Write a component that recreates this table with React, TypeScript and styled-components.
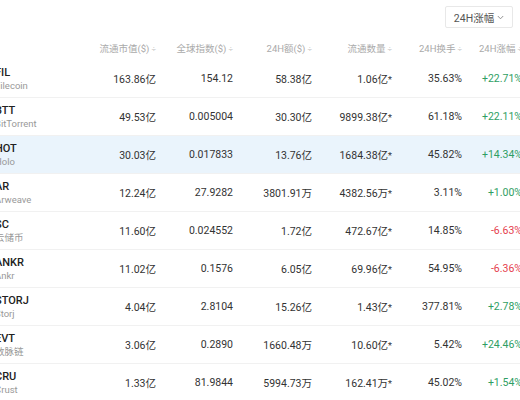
import React from "react";
import styled, { createGlobalStyle } from "styled-components";

const Global = createGlobalStyle`
  html, body { margin: 0; padding: 0; background: #fff; }
  body { font-family: Roboto, "Noto Sans CJK SC", sans-serif; color: #333; }
`;

const Page = styled.div`
  width: 520px;
  height: 400px;
  overflow: hidden;
  background: #fff;
`;

const Toolbar = styled.div`
  height: 35px;
  display: flex;
  align-items: flex-start;
  justify-content: flex-end;
  padding: 6px 7px 0 0;
  box-sizing: border-box;
`;

const SelectButton = styled.div`
  width: 68px;
  height: 22px;
  box-sizing: border-box;
  border: 1px solid #e8e8e8;
  border-radius: 2px;
  display: flex;
  align-items: center;
  justify-content: center;
  gap: 3px;
  font-size: 10.5px;
  color: #555;
`;

const Table = styled.div`
  margin-left: -5px;
  width: 540px;
`;

const cols = "101px 60px 77px 79px 80px 70px 60px 11px";

const HeaderRow = styled.div`
  display: grid;
  grid-template-columns: ${cols};
  height: 25px;
  align-items: center;
  font-size: 9.5px;
  color: #aaa;
`;

const HeadCell = styled.div`
  text-align: right;
  white-space: nowrap;
`;

const Sort = styled.span`
  display: inline-block;
  margin-left: 2px;
  font-size: 8px;
  color: #bbb;
`;

const Row = styled.div<{ $active?: boolean }>`
  display: grid;
  grid-template-columns: ${cols};
  height: 38px;
  box-sizing: border-box;
  align-items: center;
  border-bottom: 1px solid #f1f1f1;
  background: ${(p) => (p.$active ? "#eaf4fc" : "#fff")};
`;

const CoinCell = styled.div`
  display: flex;
  flex-direction: column;
  gap: 1px;
`;

const Symbol = styled.div`
  font-size: 11px;
  font-weight: 500;
  color: #222;
  line-height: 13px;
`;

const Name = styled.div`
  font-size: 9.5px;
  color: #999;
  line-height: 12px;
`;

const Cell = styled.div<{ $tone?: "up" | "down" }>`
  text-align: right;
  white-space: nowrap;
  font-size: 10.5px;
  color: ${(p) => (p.$tone === "up" ? "#2f9e63" : p.$tone === "down" ? "#e5414e" : "#333")};
`;

const Star = styled.span`
  font-size: 9px;
`;

type Coin = {
  sym: string;
  name: string;
  mcap: string;
  index: string;
  vol: string;
  supply: string;
  turnover: string;
  change: string;
  active?: boolean;
};

const coins: Coin[] = [
  { sym: "FIL", name: "Filecoin", mcap: "163.86亿", index: "154.12", vol: "58.38亿", supply: "1.06亿", turnover: "35.63%", change: "+22.71%" },
  { sym: "BTT", name: "BitTorrent", mcap: "49.53亿", index: "0.005004", vol: "30.30亿", supply: "9899.38亿", turnover: "61.18%", change: "+22.11%" },
  { sym: "HOT", name: "Holo", mcap: "30.03亿", index: "0.017833", vol: "13.76亿", supply: "1684.38亿", turnover: "45.82%", change: "+14.34%", active: true },
  { sym: "AR", name: "Arweave", mcap: "12.24亿", index: "27.9282", vol: "3801.91万", supply: "4382.56万", turnover: "3.11%", change: "+1.00%" },
  { sym: "SC", name: "云储币", mcap: "11.60亿", index: "0.024552", vol: "1.72亿", supply: "472.67亿", turnover: "14.85%", change: "-6.63%" },
  { sym: "ANKR", name: "Ankr", mcap: "11.02亿", index: "0.1576", vol: "6.05亿", supply: "69.96亿", turnover: "54.95%", change: "-6.36%" },
  { sym: "STORJ", name: "Storj", mcap: "4.04亿", index: "2.8104", vol: "15.26亿", supply: "1.43亿", turnover: "377.81%", change: "+2.78%" },
  { sym: "EVT", name: "数脉链", mcap: "3.06亿", index: "0.2890", vol: "1660.48万", supply: "10.60亿", turnover: "5.42%", change: "+24.46%" },
  { sym: "CRU", name: "Crust", mcap: "1.33亿", index: "81.9844", vol: "5994.73万", supply: "162.41万", turnover: "45.02%", change: "+1.54%" },
];

const Chevron = () => (
  <svg width="7" height="5" viewBox="0 0 7 5" fill="none">
    <path d="M0.8 1 L3.5 3.8 L6.2 1" stroke="#888" strokeWidth="0.9" />
  </svg>
);

const headers = ["流通市值($)", "全球指数($)", "24H额($)", "流通数量", "24H换手", "24H涨幅"];

export default function App() {
  return (
    <Page>
      <Global />
      <Toolbar>
        <SelectButton>
          24H涨幅 <Chevron />
        </SelectButton>
      </Toolbar>
      <Table>
        <HeaderRow>
          <div />
          {headers.map((h) => (
            <HeadCell key={h}>
              {h}
              <Sort>÷</Sort>
            </HeadCell>
          ))}
        </HeaderRow>
        {coins.map((c) => (
          <Row key={c.sym} $active={c.active}>
            <CoinCell>
              <Symbol>{c.sym}</Symbol>
              <Name>{c.name}</Name>
            </CoinCell>
            <Cell>{c.mcap}</Cell>
            <Cell>{c.index}</Cell>
            <Cell>{c.vol}</Cell>
            <Cell>
              {c.supply}
              <Star>*</Star>
            </Cell>
            <Cell>{c.turnover}</Cell>
            <Cell $tone={c.change.startsWith("-") ? "down" : "up"}>{c.change}</Cell>
          </Row>
        ))}
      </Table>
    </Page>
  );
}
